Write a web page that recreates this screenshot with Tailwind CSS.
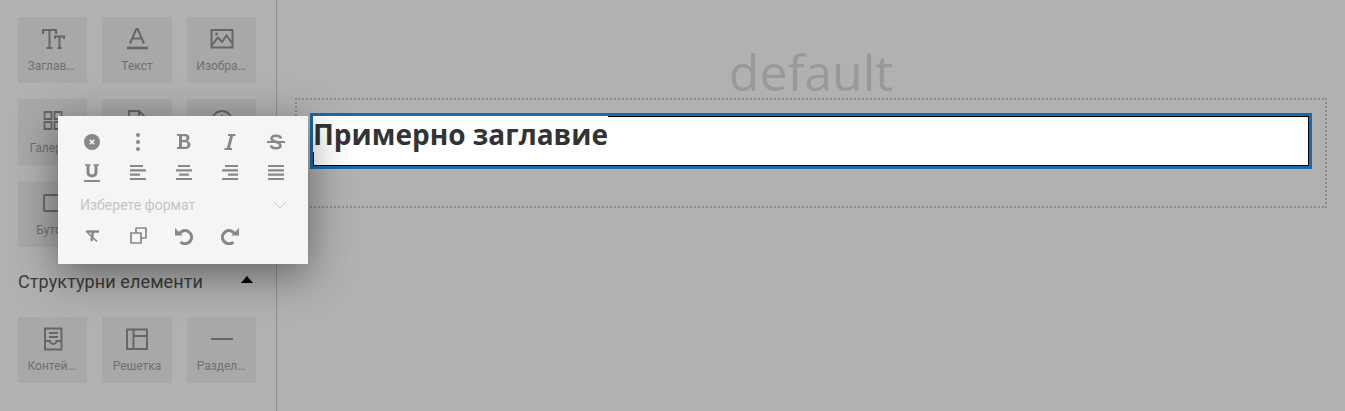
<!DOCTYPE html>
<html lang="bg">
<head>
<meta charset="UTF-8">
<title>Editor</title>
<script src="https://cdn.jsdelivr.net/npm/@tailwindcss/browser@4"></script>
</head>
<body class="bg-[#b1b1b1] overflow-hidden font-['Roboto',sans-serif]">
<div class="relative flex w-[1345px] h-[411px]">

  <!-- Sidebar -->
  <aside class="w-[277px] h-full shrink-0 border-r border-[#8e8e8e] bg-[#b1b1b1] pl-[18px] pt-[17px]">
    <div class="grid grid-cols-[69px_70px_69px] gap-x-[15px] gap-y-4 text-[#707070] text-xs">
      <div class="h-[66px] bg-[#a8a8a8] flex flex-col items-center pt-[11px]">
        <svg class="w-6 h-[22px] text-[#666]" viewBox="0 0 24 22" fill="none" stroke="currentColor" stroke-width="2"><path d="M2 6V2H15V6M8.5 2V20M5.5 20H11.5M14 11V8.5H23V11M18.5 8.5V20M16.5 20H20.5"/></svg>
        <span class="mt-[9px] pr-[3px] leading-[14px]">Заглав…</span>
      </div>
      <div class="h-[66px] bg-[#a8a8a8] flex flex-col items-center pt-[11px]">
        <svg class="w-6 h-[22px] text-[#666]" viewBox="0 0 24 22" fill="none" stroke="currentColor"><path stroke-width="2" d="M5 15.5L11.5 0.5H12.5L19 15.5M7.5 10.5H16.5"/><path stroke-width="2.6" d="M2 20H23"/></svg>
        <span class="mt-[9px] leading-[14px]">Текст</span>
      </div>
      <div class="h-[66px] bg-[#a8a8a8] flex flex-col items-center pt-[11px]">
        <svg class="w-6 h-[22px] text-[#666]" viewBox="0 0 24 22" fill="none" stroke="currentColor" stroke-width="2"><path d="M1.5 2H22.5V19.5H1.5Z"/><path d="M2 17L8 9.5L12 14L16.5 7.5L22 15"/><circle cx="6.5" cy="6" r="1.4" fill="currentColor" stroke="none"/></svg>
        <span class="mt-[9px] pr-px leading-[14px]">Изобра…</span>
      </div>
      <div class="h-[66px] bg-[#a8a8a8] flex flex-col items-center pt-[11px]">
        <svg class="w-[22px] h-[22px] text-[#666]" viewBox="0 0 22 22" fill="none" stroke="currentColor" stroke-width="1.8"><path d="M2.5 2H9.5V9H2.5ZM12.5 2H19.5V9H12.5ZM2.5 12H9.5V19H2.5ZM12.5 12H19.5V19H12.5Z"/></svg>
        <span class="mt-[9px] leading-[14px]">Галерия</span>
      </div>
      <div class="h-[66px] bg-[#a8a8a8] flex flex-col items-center pt-[11px]">
        <svg class="w-[22px] h-[22px] text-[#666]" viewBox="0 0 22 22" fill="none" stroke="currentColor" stroke-width="1.8"><path d="M3 1H13L19 7V20H3ZM13 1V7H19"/></svg>
      </div>
      <div class="h-[66px] bg-[#a8a8a8] flex flex-col items-center pt-[10px]">
        <svg class="w-6 h-6 text-[#666]" viewBox="0 0 24 24" fill="none" stroke="currentColor" stroke-width="1.8"><circle cx="12" cy="12" r="10"/><path d="M12 6V12"/></svg>
      </div>
      <div class="h-[66px] bg-[#a8a8a8] flex flex-col items-center pt-[11px]">
        <svg class="w-6 h-[22px] text-[#666]" viewBox="0 0 24 22" fill="none" stroke="currentColor" stroke-width="1.8"><rect x="3" y="3" width="18" height="16" rx="1"/></svg>
        <span class="mt-[9px] leading-[14px]">Бутон</span>
      </div>
      <div class="h-[66px] bg-[#a8a8a8]"></div>
      <div class="h-[66px] bg-[#a8a8a8]"></div>
    </div>

    <div class="flex items-center justify-between w-[235px] h-[22px] mt-6">
      <h2 class="text-lg text-[#3c3c3c] leading-[22px] tracking-[0.1px]">Структурни елементи</h2>
      <span class="w-0 h-0 border-x-[6.5px] border-x-transparent border-b-[7px] border-b-black -mt-[6px]"></span>
    </div>

    <div class="grid grid-cols-[69px_70px_69px] gap-x-[15px] mt-[24px] text-[#707070] text-xs">
      <div class="h-[66px] bg-[#a8a8a8] flex flex-col items-center pt-[10px]">
        <svg class="w-[22px] h-[24px] text-[#666]" viewBox="0 0 22 24" fill="none" stroke="currentColor" stroke-width="1.9"><path d="M3 1.5H19.5V22.5H3ZM7 6H16M7 10H16M3.5 14H8C8.5 18 14 18 14.5 14H19"/></svg>
        <span class="mt-[8px] pr-[2px] leading-[14px]">Контей…</span>
      </div>
      <div class="h-[66px] bg-[#a8a8a8] flex flex-col items-center pt-[10px]">
        <svg class="w-[22px] h-[24px] text-[#666]" viewBox="0 0 22 24" fill="none" stroke="currentColor" stroke-width="1.9"><path d="M1 2.5H21V22H1ZM7.5 2.5V22M7.5 9H21"/></svg>
        <span class="mt-[8px] leading-[14px]">Решетка</span>
      </div>
      <div class="h-[66px] bg-[#a8a8a8] flex flex-col items-center pt-[10px]">
        <svg class="w-[22px] h-[24px] text-[#666]" viewBox="0 0 22 24" fill="none" stroke="currentColor" stroke-width="2"><path d="M0 12H22"/></svg>
        <span class="mt-[8px] pr-px leading-[14px]">Раздел…</span>
      </div>
    </div>
  </aside>

  <!-- Canvas -->
  <main class="flex-1 pl-[18px] pr-[18px] pt-[38px]">
    <div class="h-[60px] text-center text-[50px] leading-[68px] text-[#999] font-['Open_Sans',sans-serif]">default</div>
    <div class="h-[110px] border-2 border-dotted border-[#8c8c8c] pl-[13px] pr-[13px] pt-[13px]">
      <div class="h-[56px] border-[3px] border-[#1a69a8]">
        <div class="h-full border border-black bg-white">
          <h1 class="w-fit -mt-px -ml-px bg-white text-[28px] leading-[36px] font-bold text-[#333] font-['Open_Sans',sans-serif]">Примерно заглавие</h1>
        </div>
      </div>
    </div>
  </main>

  <!-- Floating text toolbar -->
  <div class="absolute left-[58px] top-[116px] w-[250px] h-[148px] bg-[#f5f5f5] shadow-[0_10px_40px_rgba(0,0,0,0.45)] pl-[11px] pt-[10px] text-[#888]">
    <div class="flex h-[31px]">
      <div class="w-[46px] flex items-center justify-center">
        <svg class="w-4 h-4" viewBox="0 0 16 16"><circle cx="8" cy="8" r="8" fill="currentColor"/><path d="M5.8 5.8L10.2 10.2M10.2 5.8L5.8 10.2" stroke="#f5f5f5" stroke-width="1.6"/></svg>
      </div>
      <div class="w-[46px] flex items-center justify-center">
        <svg class="w-1 h-[18px]" viewBox="0 0 4 18" fill="currentColor"><circle cx="2" cy="2" r="2"/><circle cx="2" cy="9" r="2"/><circle cx="2" cy="16" r="2"/></svg>
      </div>
      <div class="w-[46px] flex items-center justify-center">
        <svg class="w-[14px] h-[15px]" viewBox="0 0 14 15" fill="currentColor" fill-rule="evenodd"><path d="M0 0H8C11 0 12.5 1.6 12.5 3.8C12.5 5.3 11.6 6.4 10.4 7C12.2 7.5 13.5 8.8 13.5 10.8C13.5 13.4 11.5 15 8.5 15H0V13H2V2H0ZM5 2.2V6H7.5C8.8 6 9.5 5.3 9.5 4.1C9.5 2.9 8.8 2.2 7.5 2.2ZM5 8.2V12.8H8C9.6 12.8 10.5 12 10.5 10.5C10.5 9 9.6 8.2 8 8.2Z"/></svg>
      </div>
      <div class="w-[46px] flex items-center justify-center">
        <svg class="w-3 h-4" viewBox="0 0 12 16" fill="none" stroke="currentColor"><path stroke-width="2" d="M4 1H11.5M0.5 15H8"/><path stroke-width="3" d="M7.8 1L4.2 15"/></svg>
      </div>
      <div class="w-[46px] flex items-center justify-center">
        <svg class="w-[18px] h-4" viewBox="0 0 18 16" fill="none" stroke="currentColor"><path stroke-width="2.6" d="M14 4.5C13.5 1 4.5 0.5 4.5 4.5C4.5 8 13.5 7.5 13.5 11.5C13.5 15.5 4.5 15 4 11.5"/><path stroke-width="2" d="M0 8H18"/></svg>
      </div>
    </div>
    <div class="flex h-[31px]">
      <div class="w-[46px] flex items-center justify-center">
        <svg class="w-4 h-[18px]" viewBox="0 0 16 18" fill="none" stroke="currentColor"><path stroke-width="1.6" d="M1 1H6.5M9.5 1H15"/><path stroke-width="3" d="M4 1V8.5C4 13 12 13 12 8.5V1"/><path stroke-width="2" d="M0 17H16"/></svg>
      </div>
      <div class="w-[46px] flex items-center justify-center">
        <svg class="w-4 h-[15px]" viewBox="0 0 16 15" stroke="currentColor" stroke-width="2.2"><path d="M0 1H13M0 5.3H16M0 9.6H10M0 14H16"/></svg>
      </div>
      <div class="w-[46px] flex items-center justify-center">
        <svg class="w-4 h-[15px]" viewBox="0 0 16 15" stroke="currentColor" stroke-width="2.2"><path d="M2 1H14M0 5.3H16M3 9.6H13M0 14H16"/></svg>
      </div>
      <div class="w-[46px] flex items-center justify-center">
        <svg class="w-4 h-[15px]" viewBox="0 0 16 15" stroke="currentColor" stroke-width="2.2"><path d="M3 1H16M0 5.3H16M6 9.6H16M0 14H16"/></svg>
      </div>
      <div class="w-[46px] flex items-center justify-center">
        <svg class="w-4 h-[15px]" viewBox="0 0 16 15" stroke="currentColor" stroke-width="2.2"><path d="M0 1H16M0 5.3H16M0 9.6H16M0 14H16"/></svg>
      </div>
    </div>
    <div class="flex items-center justify-between h-[31px] mt-px ml-[11px] pr-[21px] text-sm text-[#c4c4c4]">
      <span>Изберете формат</span>
      <svg class="w-[14px] h-2" viewBox="0 0 14 8" fill="none" stroke="currentColor" stroke-width="1"><path d="M1 1L7 7L13 1"/></svg>
    </div>
    <div class="flex h-[31px]">
      <div class="w-[46px] flex items-center justify-center">
        <svg class="w-[14px] h-3" viewBox="0 0 14 12" fill="none" stroke="currentColor"><path stroke-width="2.4" d="M2 1.5H14M8 1.5L6.5 11"/><path stroke-width="1.6" d="M1 1L12 11.5"/></svg>
      </div>
      <div class="w-[46px] flex items-center justify-center">
        <svg class="w-[17px] h-[17px]" viewBox="0 0 17 17" fill="none" stroke="currentColor" stroke-width="1.7"><path d="M1 6H10.5C11 6 11 6 11 6.5V16H1.5C1 16 1 16 1 15.5ZM6 6V1.5C6 1 6 1 6.5 1H15.5C16 1 16 1 16 1.5V10.5C16 11 16 11 15.5 11H11"/></svg>
      </div>
      <div class="w-[46px] flex items-center justify-center">
        <svg class="w-[18px] h-[18px]" viewBox="0 0 18 18" fill="none" stroke="currentColor" stroke-width="3"><path d="M4.2 7A6.6 6.6 0 1 1 5.5 15"/><path d="M0 1L0 8.5L7.5 8.5Z" fill="currentColor" stroke="none"/></svg>
      </div>
      <div class="w-[46px] flex items-center justify-center">
        <svg class="w-[18px] h-[18px]" viewBox="0 0 18 18" fill="none" stroke="currentColor" stroke-width="3"><path d="M13.8 7A6.6 6.6 0 1 0 12.5 15"/><path d="M18 1L18 8.5L10.5 8.5Z" fill="currentColor" stroke="none"/></svg>
      </div>
    </div>
  </div>
</div>
</body>
</html>
